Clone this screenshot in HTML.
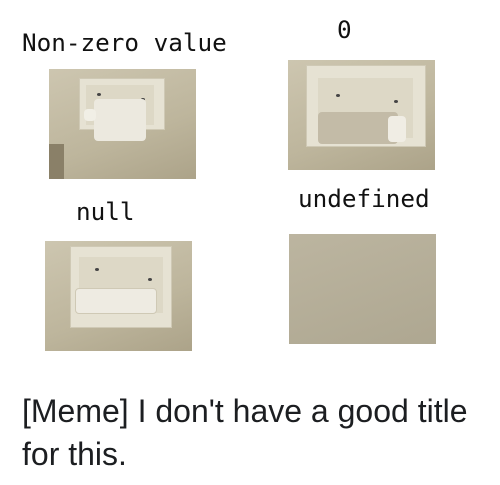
<!DOCTYPE html>
<html><head><meta charset="utf-8"><style>
body{margin:0;width:500px;height:485px;background:#fff;position:relative;overflow:hidden}
.m{position:absolute;font-family:"DejaVu Sans Mono","Liberation Mono",monospace;font-size:24.3px;color:#111;white-space:nowrap;line-height:1}
.img{position:absolute;width:147px;height:110px;background:linear-gradient(160deg,#cdc6b0,#bdb59c 60%,#aca389);overflow:hidden}
.h{position:absolute;background:#e6e2d3;border:1px solid #cfc9b5}
.in{position:absolute;background:#ddd8c6}
.roll{position:absolute;border-radius:4px}
.dot{position:absolute;width:4px;height:3px;background:#444;border-radius:50%}
.cap{position:absolute;left:22px;top:390px;font-family:"Liberation Sans",sans-serif;font-size:32px;line-height:43px;color:#1c1e21;width:475px;white-space:nowrap}
</style></head><body>
<div class="m" style="left:22px;top:31px">Non-zero value</div>
<div class="m" style="left:337px;top:18px">0</div>
<div class="m" style="left:76px;top:200px">null</div>
<div class="m" style="left:298px;top:187px">undefined</div>

<div class="img" style="left:49px;top:69px">
 <div class="h" style="left:30px;top:9px;width:84px;height:50px"></div>
 <div class="in" style="left:37px;top:16px;width:68px;height:40px"></div>
 <div class="dot" style="left:48px;top:24px"></div><div class="dot" style="left:92px;top:29px"></div>
 <div class="roll" style="left:45px;top:30px;width:52px;height:42px;background:#ece9df"></div>
 <div class="roll" style="left:35px;top:40px;width:12px;height:12px;background:#f1efe6"></div>
 <div style="position:absolute;left:0;top:75px;width:15px;height:35px;background:#8a8068"></div>
</div>

<div class="img" style="left:288px;top:60px">
 <div class="h" style="left:18px;top:5px;width:118px;height:80px"></div>
 <div class="in" style="left:30px;top:18px;width:95px;height:60px"></div>
 <div class="dot" style="left:48px;top:34px"></div><div class="dot" style="left:106px;top:40px"></div>
 <div class="roll" style="left:30px;top:52px;width:80px;height:32px;background:#c3bba7"></div>
 <div class="roll" style="left:100px;top:56px;width:18px;height:26px;background:#f0ede4"></div>
</div>

<div class="img" style="left:45px;top:241px">
 <div class="h" style="left:25px;top:5px;width:100px;height:80px"></div>
 <div class="in" style="left:34px;top:16px;width:84px;height:56px"></div>
 <div class="dot" style="left:50px;top:27px"></div><div class="dot" style="left:103px;top:37px"></div>
 <div class="roll" style="left:30px;top:47px;width:80px;height:24px;background:#eeebe2;border:1px solid #cfc9b5"></div>
</div>

<div class="img" style="left:289px;top:234px;background:linear-gradient(160deg,#bcb5a0,#aea791)"></div>

<div class="cap">[Meme] I don't have a good title<br>for this.</div>
</body></html>
